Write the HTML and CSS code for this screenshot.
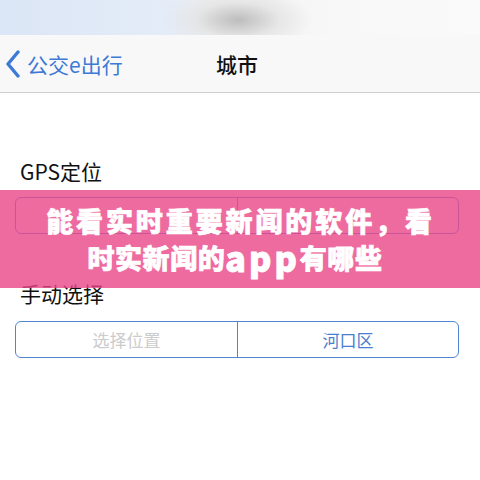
FILE: index.html
```html
<!DOCTYPE html>
<html lang="zh-CN">
<head>
<meta charset="UTF-8">
<title>城市</title>
<link rel="stylesheet" href="styles.css">
</head>
<body>
<div class="page">
  <div class="statusbar"></div>
  <div class="navbar">
    <a class="back">
      <svg width="16" height="28" viewBox="0 0 16 28"><polyline points="13,2 3,14 13,26" fill="none" stroke="#3d7ad6" stroke-width="3.4" stroke-linecap="round" stroke-linejoin="round"/></svg>
      <span>公交e出行</span>
    </a>
    <div class="title">城市</div>
    <div></div>
  </div>

  <div class="content">
    <div class="label gps-label">GPS定位</div>
    <div class="segment">
      <div class="seg-item"></div>
      <div class="seg-item"></div>
    </div>

    <div class="label manual-label">手动选择</div>
    <div class="segment">
      <div class="seg-item placeholder">选择位置</div>
      <div class="seg-item active">河口区</div>
    </div>
  </div>

  <div class="banner">
    <div class="line line1">能看实时重要新闻的软件，看</div>
    <div class="line line2">时实新闻的<span class="latin">app</span>有哪些</div>
  </div>
</div>
</body>
</html>
```

FILE: styles.css
```css
body{
  margin:0;
  background:#fff;
  font-family:"Noto Sans CJK SC","Noto Sans",sans-serif;
  color:#111;
}
.page{
  position:relative;
  width:480px;
  height:480px;
  overflow:hidden;
}
.statusbar{
  height:35px;
  background:
    radial-gradient(ellipse 75px 32px at 238px 20px,#bdbdbd 0%,rgba(225,225,225,0.7) 55%,rgba(255,255,255,0) 100%),
    linear-gradient(90deg,#dbe6f6 0%,#e4ecf8 35%,#f1f1f1 45%,#f8f8f8 70%,#fafafa 100%);
}
.navbar{
  height:57px;
  background:#f8f8f8;
  border-bottom:1px solid #cfcfcf;
  display:grid;
  grid-template-columns:1fr auto 1fr;
  align-items:center;
}
.back{
  display:flex;
  align-items:center;
  gap:6px;
  padding-left:5px;
  color:#3d7ad6;
  font-size:21px;
}
.title{
  font-size:21px;
  font-weight:500;
  color:#111;
  padding-right:6px;
}
.content{
  padding:0 21px 0 15px;
}
.label{
  font-size:21px;
  line-height:28px;
  padding-left:5px;
}
.gps-label{
  margin-top:64px;
  margin-bottom:12px;
}
.manual-label{
  margin-top:45px;
  margin-bottom:14px;
}
.segment{
  display:grid;
  grid-template-columns:221px 1fr;
  height:37px;
  border:1.5px solid #5085d4;
  border-radius:6px;
  box-sizing:border-box;
}
.seg-item{
  display:flex;
  align-items:center;
  justify-content:center;
  font-size:17px;
}
.seg-item + .seg-item{
  border-left:1.5px solid #5085d4;
}
.placeholder{
  color:#cccccc;
}
.active{
  color:#4a7ecf;
}
.banner{
  position:absolute;
  left:0;
  top:190px;
  width:480px;
  height:98px;
  box-sizing:border-box;
  padding-top:12px;
  background:rgba(234,70,136,0.8);
  color:#fff;
  font-weight:900;
  font-size:27px;
  line-height:37px;
  text-align:center;
  -webkit-text-stroke:0.7px #fff;
}
.line1{
  letter-spacing:2.9px;
  padding-left:1px;
}
.line2{
  letter-spacing:0.6px;
  padding-right:10px;
}
.latin{
  display:inline-block;
  font-size:28px;
  line-height:28px;
  letter-spacing:2.5px;
  transform:scale(1.22);
  margin:0 6px 0 7px;
}
```
